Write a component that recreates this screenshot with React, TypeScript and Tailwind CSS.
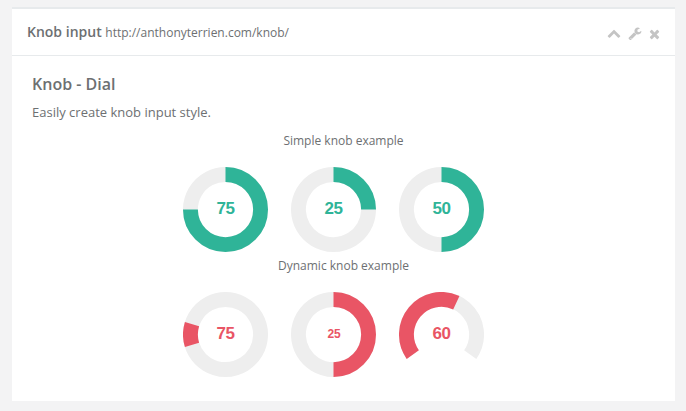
const GREEN = '#2fb498';
const RED = '#e95565';

function arc(from: number, to: number) {
  const r = 35.0625;
  const rad = (d: number) => (d * Math.PI) / 180;
  const x1 = 42.5 + r * Math.sin(rad(from));
  const y1 = 42.5 - r * Math.cos(rad(from));
  const x2 = 42.5 + r * Math.sin(rad(to));
  const y2 = 42.5 - r * Math.cos(rad(to));
  return `M${x1} ${y1}A${r} ${r} 0 ${to - from > 180 ? 1 : 0} 1 ${x2} ${y2}`;
}

type KnobProps = {
  value: number;
  from: number;
  to: number;
  color: string;
  track?: [number, number];
  small?: boolean;
};

function Knob({ value, from, to, color, track = [0, 359.99], small }: KnobProps) {
  return (
    <div className="grid h-[85px] w-[85px] place-items-center">
      <svg width="85" height="85" viewBox="0 0 85 85" fill="none" strokeWidth="14.875" className="col-start-1 row-start-1">
        <path d={arc(track[0], track[1])} stroke="#eeeeee" />
        <path d={arc(from, to)} stroke={color} />
      </svg>
      <span
        className={`col-start-1 row-start-1 pb-[2px] font-['Liberation_Sans',Arial,sans-serif] font-bold leading-none ${
          small ? 'pl-px text-[12px] tracking-[-0.2px]' : 'text-[17px] tracking-[-0.4px]'
        }`}
        style={{ color }}
      >
        {value}
      </span>
    </div>
  );
}

function Glyph({ width, units, d }: { width: number; units: number; d: string }) {
  return (
    <svg width={width} height="14" viewBox={`0 0 ${units} 1792`} fill="currentColor">
      <path transform="translate(0 1536) scale(1 -1)" d={d} />
    </svg>
  );
}

const CHEVRON =
  'M1683 331l-166 -165q-19 -19 -45 -19t-45 19l-531 531l-531 -531q-19 -19 -45 -19t-45 19l-166 165q-19 19 -19 45.5t19 45.5l742 741q19 19 45 19t45 -19l742 -741q19 -19 19 -45.5t-19 -45.5z';
const WRENCH =
  'M448 64q0 26 -19 45t-45 19t-45 -19t-19 -45t19 -45t45 -19t45 19t19 45zM1084 581l-682 -682q-37 -37 -90 -37q-52 0 -91 37l-106 108q-38 36 -38 90q0 53 38 91l681 681q39 -98 114.5 -173.5t173.5 -114.5zM1716 980q0 -39 -23 -106q-47 -134 -164.5 -217.5t-258.5 -83.5q-185 0 -316.5 131.5t-131.5 316.5t131.5 316.5t316.5 131.5q58 0 121.5 -16.5t107.5 -46.5q16 -11 16 -28t-16 -28l-293 -169v-224l193 -107q5 3 79 48.5t135.5 81t70.5 35.5q15 0 23.5 -10t8.5 -25z';
const TIMES =
  'M1298 214q0 -40 -28 -68l-136 -136q-28 -28 -68 -28t-68 28l-294 294l-294 -294q-28 -28 -68 -28t-68 28l-136 136q-28 28 -28 68t28 68l294 294l-294 294q-28 28 -28 68t28 68l136 136q28 28 68 28t68 -28l294 -294l294 294q28 28 68 28t68 -28l136 -136q28 -28 28 -68t-28 -68l-294 -294l294 -294q28 -28 28 -68z';

export default function App() {
  return (
    <div className="h-[411px] w-[686px] bg-[#f3f3f4] pt-[7px] pr-[11px] pb-[10px] pl-3 font-['Open_Sans',sans-serif] text-[13px] text-[#6d7072]">
      <div className="h-[394px] border-t-2 border-[#e7eaec] bg-white">
        <div className="flex h-[47px] justify-between border-b border-[#e7eaec] px-[15px] pt-[13px]">
          <h5 className="text-[14px] font-semibold leading-[20px]">
            Knob input <small className="text-[12px] font-normal">http://anthonyterrien.com/knob/</small>
          </h5>
          <div className="flex gap-[7px] pt-[5px] text-[#c4c4c4]">
            <Glyph width={14} units={1792} d={CHEVRON} />
            <Glyph width={14} units={1792} d={WRENCH} />
            <Glyph width={11} units={1408} d={TIMES} />
          </div>
        </div>
        <div className="px-5 pt-[17px]">
          <h3 className="text-[16px] font-semibold leading-[22px]">Knob - Dial</h3>
          <p className="mt-[8px] leading-[18px]">Easily create knob input style.</p>
          <div className="flex flex-col items-center">
            <p className="mt-[10px] text-[12px] leading-[20px]">Simple knob example</p>
            <div className="mt-[16px] flex gap-[23px] pr-[20px]">
              <Knob value={75} from={0} to={270} color={GREEN} />
              <Knob value={25} from={0} to={90} color={GREEN} />
              <Knob value={50} from={0} to={180} color={GREEN} />
            </div>
            <p className="mt-[4px] text-[12px] leading-[20px]">Dynamic knob example</p>
            <div className="mt-[16px] flex gap-[23px] pr-[20px]">
              <Knob value={75} from={252.8} to={287.2} color={RED} />
              <Knob value={25} from={0} to={180} color={RED} small />
              <Knob value={60} from={-125} to={25} color={RED} track={[-125, 125]} />
            </div>
          </div>
        </div>
      </div>
    </div>
  );
}
